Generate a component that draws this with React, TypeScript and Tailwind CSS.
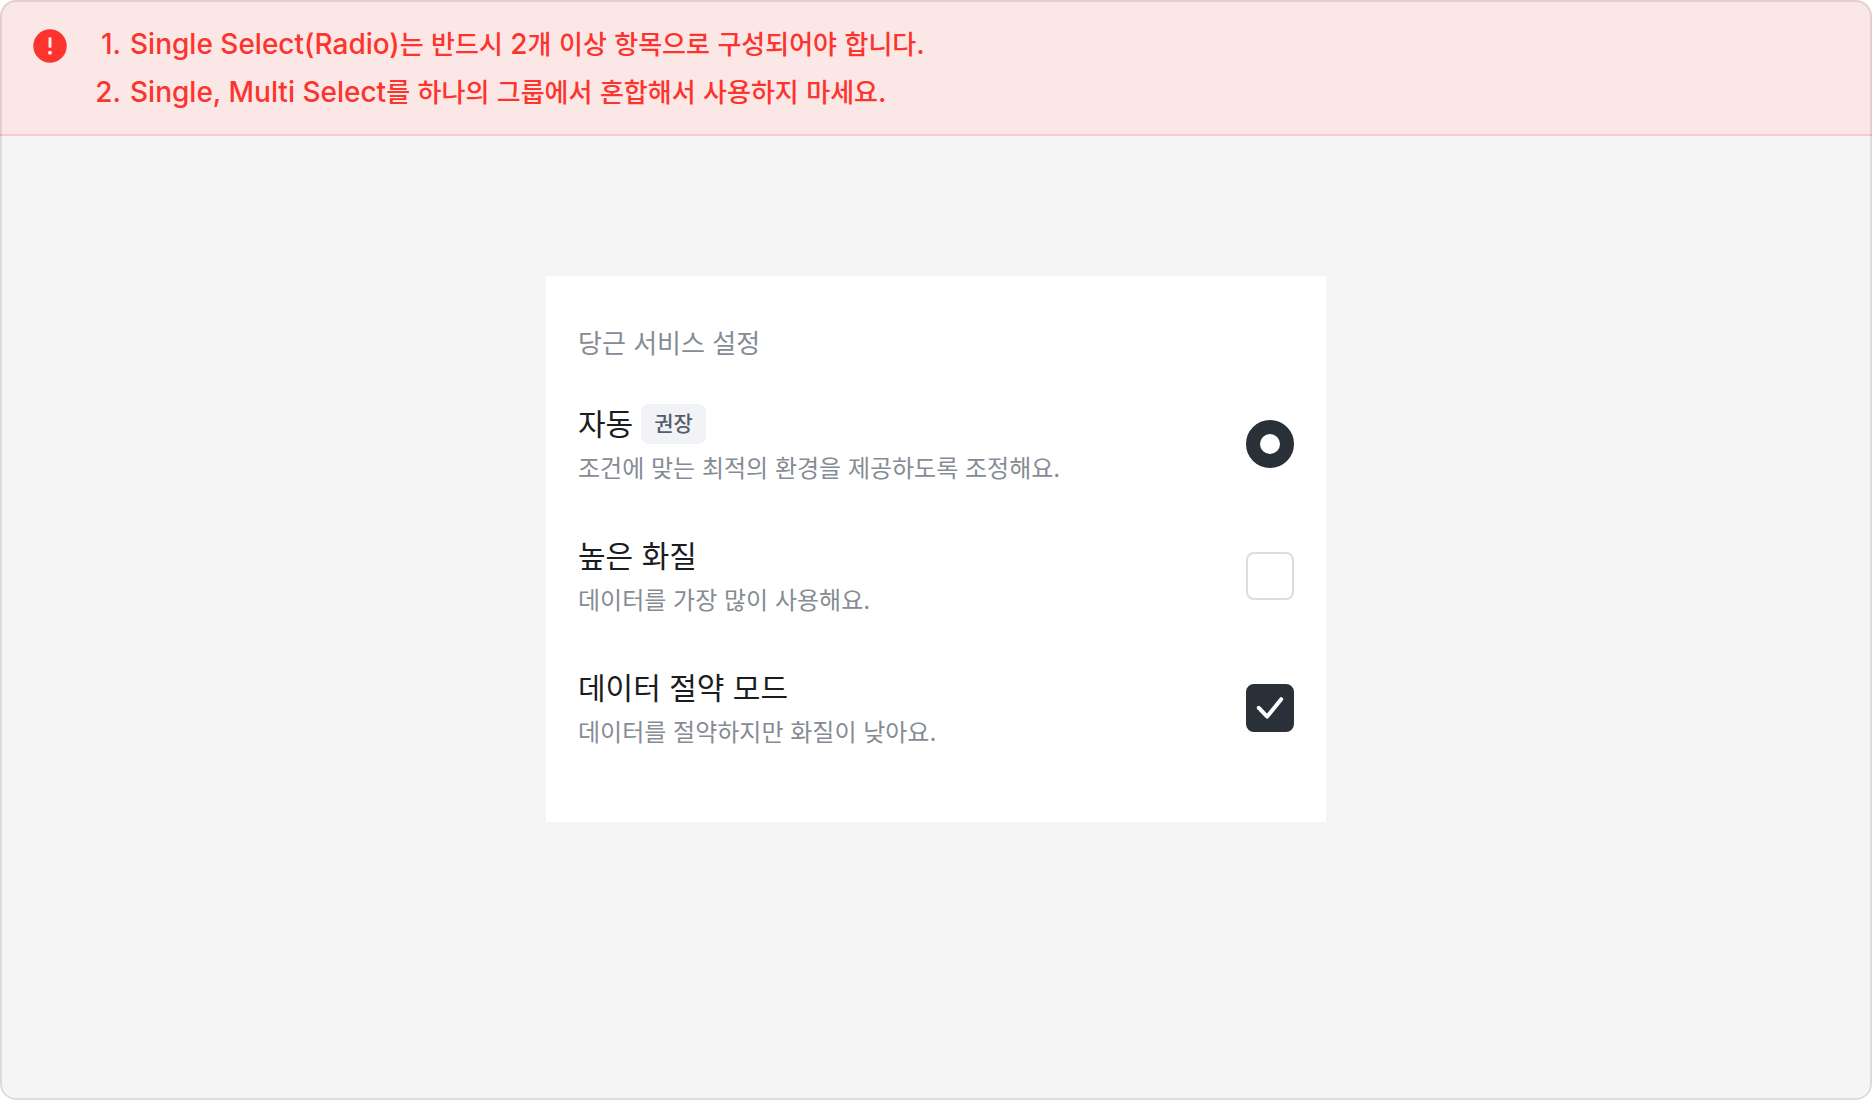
import { useState } from 'react';

const WARNINGS = [
  'Single Select(Radio)는 반드시 2개 이상 항목으로 구성되어야 합니다.',
  'Single, Multi Select를 하나의 그룹에서 혼합해서 사용하지 마세요.',
];

interface Option {
  id: string;
  title: string;
  description: string;
  control: 'radio' | 'checkbox';
  badge?: string;
}

const OPTIONS: Option[] = [
  { id: 'auto', title: '자동', description: '조건에 맞는 최적의 환경을 제공하도록 조정해요.', control: 'radio', badge: '권장' },
  { id: 'high', title: '높은 화질', description: '데이터를 가장 많이 사용해요.', control: 'checkbox' },
  { id: 'saver', title: '데이터 절약 모드', description: '데이터를 절약하지만 화질이 낮아요.', control: 'checkbox' },
];

export default function App() {
  const [selected, setSelected] = useState<Record<string, boolean>>({ auto: true, high: false, saver: true });

  return (
    <div className="min-h-screen bg-white font-['Inter','Noto_Sans_CJK_KR',sans-serif]">
      <div className="relative flex min-h-screen flex-col overflow-hidden rounded-2xl bg-[#f5f5f5]">
        <WarningBanner />

        <main className="flex flex-1 flex-col items-center px-8 pt-[140px] pb-16">
          <section className="w-full max-w-[780px] bg-white px-8 pt-12 pb-12" aria-labelledby="settings-title">
            <h2 id="settings-title" className="mb-3.5 text-[26px] leading-10 text-[#868b94]">당근 서비스 설정</h2>
            {OPTIONS.map(option => (
              <OptionRow
                key={option.id}
                option={option}
                checked={selected[option.id]}
                onChange={checked => setSelected({ ...selected, [option.id]: checked })}
              />
            ))}
          </section>
        </main>

        {/* Frame line, drawn over the banner too */}
        <div className="pointer-events-none absolute inset-0 rounded-2xl border-2 border-black/10" />
      </div>
    </div>
  );
}

function WarningBanner() {
  return (
    <div role="alert" className="flex gap-5 border-b-2 border-[#f9cccb] bg-[#fbe7e6] px-8 pt-5 pb-[18px] text-[#fd342d]">
      <svg viewBox="0 0 36 36" className="mt-2 size-9 shrink-0" aria-hidden="true">
        <circle cx="18" cy="18" r="16.7" fill="currentColor" />
        <path d="M18 10.4v8.2" stroke="#fbe7e6" strokeWidth="3" strokeLinecap="round" />
        <circle cx="18" cy="24.7" r="2" fill="#fbe7e6" />
      </svg>
      <ol className="text-[28px] leading-[48px] font-medium">
        {WARNINGS.map((text, i) => (
          <li key={text} className="flex gap-[9px]">
            <span className="w-[33px] shrink-0 text-right">{i + 1}.</span>
            <span><MixedText text={text} /></span>
          </li>
        ))}
      </ol>
    </div>
  );
}

// Hangul reads larger than Latin at the same size, so set it a step smaller
function MixedText({ text }: { text: string }) {
  return text.split(/([가-힣]+)/).map((part, i) => (
    i % 2 === 1 ? <span key={i} className="text-[26px] leading-none">{part}</span> : part
  ));
}

function OptionRow({ option, checked, onChange }: { option: Option; checked: boolean; onChange: (checked: boolean) => void }) {
  return (
    <label htmlFor={option.id} className="flex items-center justify-between gap-8 py-[25px]">
      <span className="flex flex-col gap-2">
        <span className="flex items-center gap-2 pt-px text-[30px] leading-10 text-[#1a1c20]">
          {option.title}
          {option.badge && (
            <span className="rounded-lg bg-[#f2f3f6] px-[13px] text-[21px] leading-10 font-medium text-[#555d6d]">{option.badge}</span>
          )}
        </span>
        <span className="pt-px text-2xl leading-8 text-[#868b94]">{option.description}</span>
      </span>

      {option.control === 'radio' ? (
        <input
          type="radio"
          id={option.id}
          name="quality"
          checked={checked}
          onChange={e => onChange(e.target.checked)}
          className="size-12 shrink-0 appearance-none rounded-full border-2 border-[#dcdce3] bg-white checked:border-[14px] checked:border-[#2a3038]"
        />
      ) : (
        <span className="relative size-12 shrink-0">
          <input
            type="checkbox"
            id={option.id}
            checked={checked}
            onChange={e => onChange(e.target.checked)}
            className="peer block size-12 appearance-none rounded-lg border-2 border-[#dcdce3] bg-white checked:border-[#2a3038] checked:bg-[#2a3038]"
          />
          <svg viewBox="0 0 48 48" className="pointer-events-none absolute inset-0 hidden peer-checked:block" aria-hidden="true">
            <path d="M12.8 23.8 21.2 32.6 35.2 15.2" fill="none" stroke="#fff" strokeWidth="4" strokeLinecap="round" strokeLinejoin="round" />
          </svg>
        </span>
      )}
    </label>
  );
}
